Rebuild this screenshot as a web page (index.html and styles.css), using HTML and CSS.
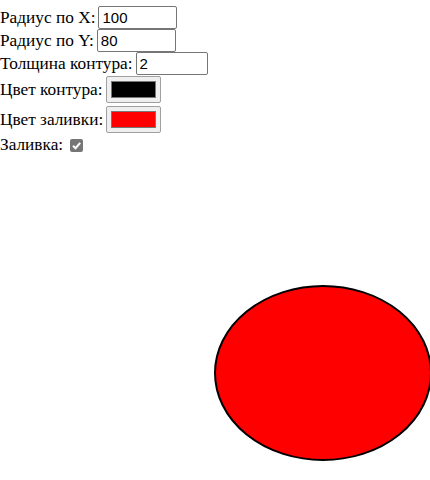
FILE: index.html
```html
<!DOCTYPE html>
<html>
<head>
<meta charset="utf-8">
<link rel="stylesheet" href="styles.css">
</head>
<body>
<div class="controls">
  <label class="row r1">Радиус по X: <input class="num" type="text" value="100"></label>
  <label class="row r2">Радиус по Y: <input class="num" type="text" value="80"></label>
  <label class="row r3">Толщина контура: <input class="num" type="text" value="2"></label>
  <label class="row r4">Цвет контура: <span class="color"><span class="swatch black"></span></span></label>
  <label class="row r5">Цвет заливки: <span class="color"><span class="swatch red"></span></span></label>
  <label class="row r6">Заливка: <span class="check"><svg width="13" height="13" viewBox="0 0 13 13"><path d="M3 6.8 L5.5 9.2 L10.2 3.8" fill="none" stroke="#fff" stroke-width="2"/></svg></span></label>
</div>
<svg class="canvas" width="430" height="320" viewBox="0 0 430 320">
  <ellipse cx="323" cy="213" rx="108" ry="87" fill="#ff0000" stroke="#000" stroke-width="2"/>
</svg>
</body>
</html>
```
FILE: styles.css
```css
html, body {
  margin: 0;
  padding: 0;
  background: #fff;
}
body {
  font-family: "Liberation Serif", "Times New Roman", serif;
  font-size: 17.3px;
  color: #000;
}
.controls {
  display: flex;
  flex-direction: column;
  padding-top: 6px;
  height: 154px;
}
.row {
  display: flex;
  align-items: center;
  gap: 3px;
  height: 23px;
  white-space: nowrap;
}
.num {
  box-sizing: border-box;
  height: 23px;
  width: 79px;
  margin: 0;
  padding: 1px 3px;
  border: 1px solid #767676;
  border-radius: 2px;
  font-family: "Liberation Sans", Arial, sans-serif;
  font-size: 15px;
  color: #000;
  background: #fff;
}
.r3 .num { width: 72px; }
.r4 { height: 27px; margin-top: 1px; gap: 3px; }
.r5 { height: 27px; margin-top: 3px; gap: 3px; }
.r6 { height: 18px; margin-top: 3px; gap: 7px; }
.color {
  box-sizing: border-box;
  display: flex;
  align-items: center;
  justify-content: center;
  width: 55px;
  height: 27px;
  border: 1px solid #a0a0a0;
  border-radius: 2px;
  background: #efefef;
}
.swatch {
  display: block;
  width: 43px;
  height: 15px;
  border: 1px solid #777;
}
.swatch.black { background: #000; }
.swatch.red { background: #ff0000; }
.check {
  display: block;
  width: 13px;
  height: 13px;
  border-radius: 2px;
  background: #767676;
}
.check svg { display: block; }
.canvas {
  display: block;
}
```
